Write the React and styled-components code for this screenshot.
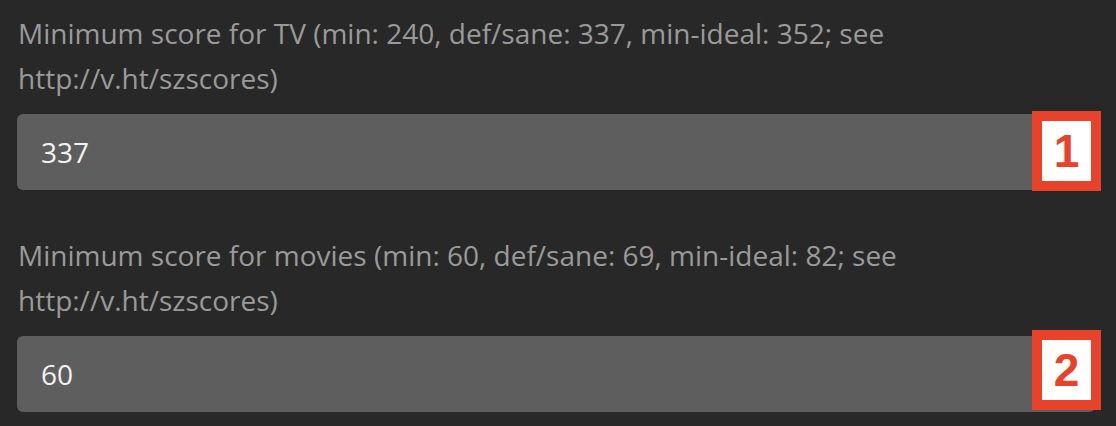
import React from 'react';
import styled, { createGlobalStyle } from 'styled-components';

const GlobalStyle = createGlobalStyle`
  html, body {
    margin: 0;
    padding: 0;
    background: #282828;
  }
  body {
    font-family: "Open Sans", "Liberation Sans", sans-serif;
  }
`;

const Page = styled.div`
  width: 1116px;
  height: 426px;
  overflow: hidden;
  padding: 11px 21px 0 17px;
  box-sizing: border-box;
  display: flex;
  flex-direction: column;
  gap: 43px;
`;

const Field = styled.div`
  position: relative;
  display: flex;
  flex-direction: column;
`;

const Label = styled.label`
  display: block;
  color: #9a9a9a;
  font-size: 28px;
  line-height: 45px;
  padding-left: 1px;
  margin-bottom: 13px;
`;

const Input = styled.input`
  box-sizing: border-box;
  width: 100%;
  height: 76px;
  border: none;
  border-radius: 6px;
  background: #5e5e5e;
  color: #f2f2f2;
  font-family: "Open Sans", "Liberation Sans", sans-serif;
  font-size: 28px;
  padding: 0 24px;
  outline: none;
`;

const Badge = styled.div`
  position: absolute;
  right: -6px;
  bottom: ${p => p.bottom}px;
  width: 69px;
  height: 80px;
  box-sizing: border-box;
  border: 10px solid #e8432a;
  background: #fff;
  color: #e8432a;
  display: flex;
  align-items: center;
  justify-content: center;
  font-family: "Liberation Sans", Arial, sans-serif;
  font-weight: bold;
  font-size: 46px;
`;

const fields = [
  {
    label: 'Minimum score for TV (min: 240, def/sane: 337, min-ideal: 352; see http://v.ht/szscores)',
    value: '337',
    badge: '1',
    bottom: -1,
  },
  {
    label: 'Minimum score for movies (min: 60, def/sane: 69, min-ideal: 82; see http://v.ht/szscores)',
    value: '60',
    badge: '2',
    bottom: 2,
  },
];

export default function App() {
  return (
    <>
      <GlobalStyle />
      <Page>
        {fields.map(f => (
          <Field key={f.badge}>
            <Label>{f.label}</Label>
            <Input defaultValue={f.value} />
            <Badge bottom={f.bottom}>{f.badge}</Badge>
          </Field>
        ))}
      </Page>
    </>
  );
}
